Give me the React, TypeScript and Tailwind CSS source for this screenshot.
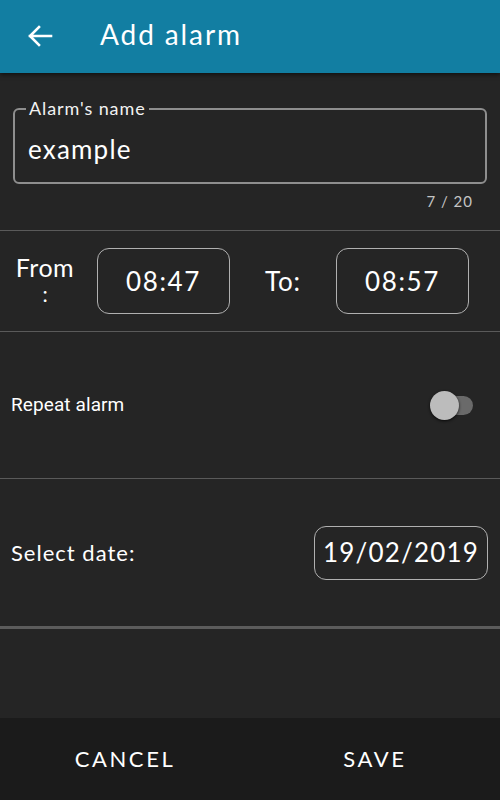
import React from "react";

const geo = { fontFamily: "Lato, 'Noto Sans', sans-serif" };
const rob = { fontFamily: "Roboto, 'Noto Sans', sans-serif" };

function Divider({ thick }: { thick?: boolean }) {
  return <div className={thick ? "h-[3px] bg-[#5c5c5c]" : "h-[1px] bg-[#5a5a5a]"} />;
}

export default function App() {
  return (
    <div className="w-[500px] h-[800px] bg-[#252525] flex flex-col text-white overflow-hidden" style={geo}>
      <div className="h-[73px] bg-[#127ea2] flex items-center shrink-0 shadow-[0_2px_4px_rgba(0,0,0,0.5)] relative z-10">
        <svg width="26" height="22" viewBox="0 0 26 22" className="ml-[27px] mb-[1px]">
          <path d="M24 11H3M12 2L3 11L12 20" fill="none" stroke="#ffffff" strokeWidth="2.6" strokeLinecap="square" />
        </svg>
        <div className="ml-[47px] text-[28px] tracking-[1.9px] leading-none pb-[6px]">Add alarm</div>
      </div>

      <div className="px-[13px] pt-[35px]">
        <div className="relative h-[76px] rounded-[6px] border-2 border-[#8e8e8e] flex items-center px-[13px]">
          <span className="absolute left-[11px] top-[-12px] px-[3px] bg-[#252525] text-[18px] leading-[20px] tracking-[0.9px] text-[#f2f2f2]">
            Alarm's name
          </span>
          <span className="text-[26px] tracking-[1.2px] pt-[6px]">example</span>
        </div>
        <div className="flex justify-end pr-[14px] pt-[6px] h-[46px]">
          <span className="text-[15px] tracking-[1px] text-[#c4c4c4] leading-[22px]">7 / 20</span>
        </div>
      </div>

      <Divider />
      <div className="h-[100px] flex items-center">
        <div className="w-[60px] ml-[15px] flex flex-col items-center mb-[4px]">
          <span className="text-[25px] tracking-[0.5px] leading-[30px]">From</span>
          <span className="text-[21px] leading-[24px]">:</span>
        </div>
        <div className="ml-[22px] w-[133px] h-[66px] rounded-[12px] border border-[#b0b0b0] flex items-center justify-center text-[26px] tracking-[1.6px]">
          08:47
        </div>
        <div className="ml-[35px] w-[71px] text-[26px] tracking-[0.8px]">To:</div>
        <div className="w-[133px] h-[66px] rounded-[12px] border border-[#b0b0b0] flex items-center justify-center text-[26px] tracking-[1.6px]">
          08:57
        </div>
      </div>
      <Divider />

      <div className="h-[146px] flex items-center justify-between pl-[11px] pr-[27px]">
        <span className="text-[19px] tracking-[0.1px]" style={rob}>Repeat alarm</span>
        <div className="relative w-[34px] h-[28px] flex items-center">
          <div className="absolute left-[0px] right-0 h-[19px] rounded-full bg-[#6a6a6a]" />
          <div className="absolute left-[-9px] w-[29px] h-[29px] rounded-full bg-[#bcbcbc] shadow-[0_1px_3px_rgba(0,0,0,0.8)]" />
        </div>
      </div>
      <Divider />

      <div className="h-[147px] flex items-center justify-between pl-[11px] pr-[12px]">
        <span className="text-[22px] tracking-[1px]">Select date:</span>
        <div className="w-[174px] h-[54px] rounded-[12px] border border-[#b0b0b0] flex items-center justify-center text-[26px] tracking-[1.2px]">
          19/02/2019
        </div>
      </div>
      <Divider thick />

      <div className="flex-1" />

      <div className="h-[82px] bg-[#1b1b1b] flex items-center shrink-0">
        <div className="flex-1 flex justify-center text-[22px] tracking-[2.6px] pb-[1px]">CANCEL</div>
        <div className="flex-1 flex justify-center text-[22px] tracking-[2.6px] pb-[1px]">SAVE</div>
      </div>
    </div>
  );
}
